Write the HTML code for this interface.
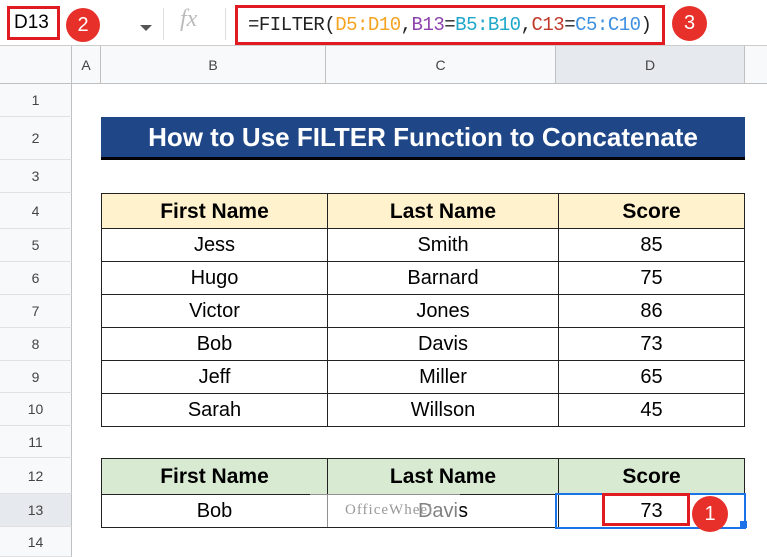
<!DOCTYPE html><html><head><style>
body{margin:0;width:767px;height:550px;overflow:hidden;background:#fff;font-family:"Liberation Sans",Arial,sans-serif;position:relative}
.a{position:absolute}
.rh{position:absolute;left:0;width:72px;background:#f8f9fa;border-bottom:1px solid #e1e1e1;border-right:1px solid #c0c0c0;box-sizing:border-box;display:flex;align-items:center;justify-content:center;font-size:14px;color:#444}
.ch{position:absolute;top:46px;height:38px;background:#f8f9fa;border-right:1px solid #c0c0c0;border-bottom:1px solid #c0c0c0;box-sizing:border-box;display:flex;align-items:center;justify-content:center;font-size:14px;color:#444}
table{position:absolute;border-collapse:collapse;left:101px;width:644px;font-size:20px;color:#000;table-layout:fixed}
td{border:1.5px solid #222;text-align:center;padding:0;height:32px;line-height:20px}
th{border:1.5px solid #222;font-size:21px;height:34px;padding:0;line-height:21px}
</style></head><body>
<div class="a" style="left:0;top:0;width:767px;height:46px;border-bottom:1px solid #ccc;box-sizing:border-box"></div>
<div class="a" style="left:7px;top:6px;width:53px;height:34px;border:3px solid #e01b22;box-sizing:border-box;font-size:19px;line-height:28px;padding-left:4px">D13</div>
<div class="a" style="left:66px;top:8px;width:34px;height:34px;border-radius:50%;background:#e8302b;color:#fff;font-size:20px;text-align:center;line-height:34px">2</div>
<div class="a" style="left:140px;top:25px;border:6px solid transparent;border-top:6px solid #555"></div>
<div class="a" style="left:163px;top:8px;width:1px;height:32px;background:#ddd"></div>
<div class="a" style="left:180px;top:6px;font-family:'Liberation Serif',serif;font-style:italic;font-size:24px;color:#bbb">fx</div>
<div class="a" style="left:225px;top:8px;width:1px;height:32px;background:#ddd"></div>
<div class="a" style="left:235px;top:5px;width:430px;height:40px;border:3px solid #e01b22;box-sizing:border-box;font-family:'Liberation Mono',monospace;font-size:19px;line-height:34px;padding-left:10px;color:#222;white-space:nowrap;letter-spacing:-0.5px">=FILTER(<span style="color:#f4a321">D5:D10</span>,<span style="color:#8e44ad">B13</span>=<span style="color:#1ea7c9">B5:B10</span>,<span style="color:#c0392b">C13</span>=<span style="color:#3d8fe0">C5:C10</span>)</div>
<div class="a" style="left:672px;top:6px;width:35px;height:35px;border-radius:50%;background:#e8302b;color:#fff;font-size:20px;text-align:center;line-height:35px">3</div>
<div class="ch" style="left:0;width:72px"></div>
<div class="ch" style="left:72px;width:29px">A</div>
<div class="ch" style="left:101px;width:225px">B</div>
<div class="ch" style="left:326px;width:230px">C</div>
<div class="ch" style="left:556px;width:189px;background:#e6e9ee">D</div>
<div class="ch" style="left:745px;width:22px;border-right:none"></div>
<div class="rh" style="top:84px;height:33px">1</div>
<div class="rh" style="top:117px;height:43px">2</div>
<div class="rh" style="top:160px;height:33px">3</div>
<div class="rh" style="top:193px;height:36px">4</div>
<div class="rh" style="top:229px;height:33px">5</div>
<div class="rh" style="top:262px;height:33px">6</div>
<div class="rh" style="top:295px;height:33px">7</div>
<div class="rh" style="top:328px;height:33px">8</div>
<div class="rh" style="top:361px;height:32px">9</div>
<div class="rh" style="top:393px;height:33px">10</div>
<div class="rh" style="top:426px;height:32px">11</div>
<div class="rh" style="top:458px;height:36px">12</div>
<div class="rh" style="top:494px;height:33px;background:#e6e9ee">13</div>
<div class="rh" style="top:527px;height:30px">14</div>
<div class="a" style="left:101px;top:117px;width:644px;height:40px;background:#1f4788;border-bottom:3px solid #000;color:#fff;font-weight:bold;font-size:26px;text-align:center;line-height:40px">How to Use FILTER Function to Concatenate</div>
<table style="top:193px">
<tr style="background:#fff2cc"><th style="width:225px">First Name</th><th style="width:230px">Last Name</th><th>Score</th></tr>
<tr><td>Jess</td><td>Smith</td><td>85</td></tr>
<tr><td>Hugo</td><td>Barnard</td><td>75</td></tr>
<tr><td>Victor</td><td>Jones</td><td>86</td></tr>
<tr><td>Bob</td><td>Davis</td><td>73</td></tr>
<tr><td>Jeff</td><td>Miller</td><td>65</td></tr>
<tr><td>Sarah</td><td>Willson</td><td>45</td></tr>
</table>
<table style="top:458px">
<tr style="background:#d9ead3"><th style="width:225px;height:35px">First Name</th><th style="width:230px;height:35px">Last Name</th><th style="height:35px">Score</th></tr>
<tr><td>Bob</td><td>Davis</td><td>73</td></tr>
</table>
<div class="a" style="left:555px;top:493px;width:187px;height:32px;border:2px solid #1a73e8"></div>
<div class="a" style="left:740px;top:521px;width:7px;height:7px;background:#1a73e8"></div>
<div class="a" style="left:602px;top:493px;width:88px;height:33px;border:3px solid #e01b22;box-sizing:border-box"></div>
<div class="a" style="left:692px;top:496px;width:36px;height:36px;border-radius:50%;background:#e8302b;color:#fff;font-size:20px;text-align:center;line-height:36px">1</div>
<div class="a" style="left:310px;top:494px;width:150px;height:33px;background:rgba(255,255,255,0.5);font-family:'Liberation Serif',serif;font-size:15px;color:#999;line-height:33px;padding-left:35px;box-sizing:border-box;letter-spacing:1px">OfficeWheel</div>
</body></html>
